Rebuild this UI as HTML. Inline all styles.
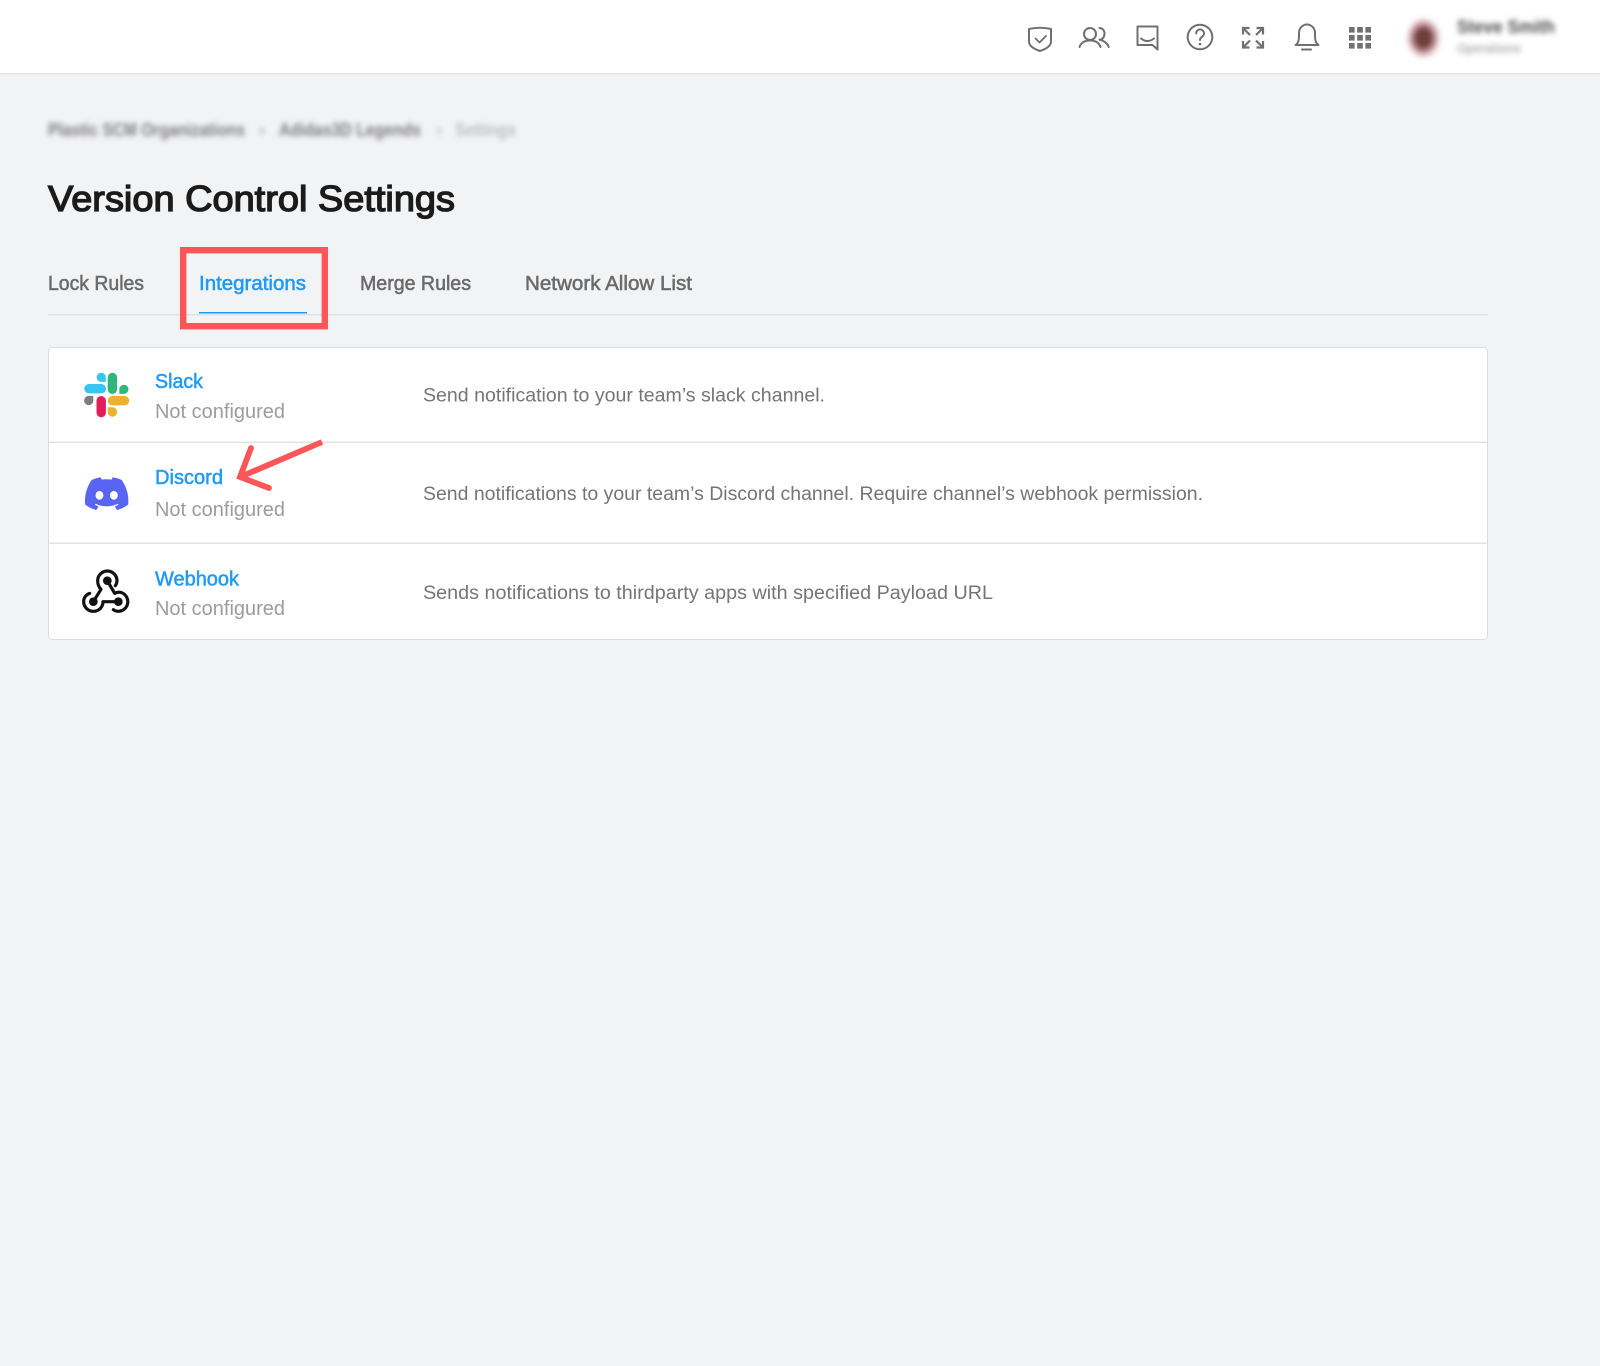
<!DOCTYPE html>
<html lang="en">
<head>
<meta charset="utf-8">
<title>Version Control Settings</title>
<style>
html,body{margin:0;padding:0;background:#f2f3f5;}
body{width:1600px;height:1366px;overflow:hidden;}
svg{display:block;font-family:"Liberation Sans",Arial,sans-serif;filter:blur(.35px);}
.ic{fill:none;stroke:#707070;stroke-width:2;stroke-linecap:round;stroke-linejoin:round;}
.tab{font-size:20px;fill:#6b6b6b;stroke:#6b6b6b;stroke-width:.55;}
.name{font-size:20px;fill:#1f9bf5;stroke:#1f9bf5;stroke-width:.5;}
.nc{font-size:20px;fill:#9c9c9c;}
.desc{font-size:19px;fill:#757575;}
</style>
</head>
<body>
<svg width="1600" height="1366" viewBox="0 0 1600 1366" xmlns="http://www.w3.org/2000/svg">
<defs>
<filter id="b3" x="-20%" y="-100%" width="140%" height="300%"><feGaussianBlur stdDeviation="2.6"/></filter>
<filter id="b4" x="-60%" y="-60%" width="220%" height="220%"><feGaussianBlur stdDeviation="3.2"/></filter>
</defs>
<rect width="1600" height="1366" fill="#f2f3f5"/>

<!-- header -->
<rect width="1600" height="73" fill="#fff"/>
<rect y="73" width="1600" height="1.5" fill="#e4e5e7"/>

<g class="ic">
<!-- shield -->
<path d="M1029 29Q1040 26.5 1051 29V41.5C1051 46 1046 49 1040 51C1034 49 1029 46 1029 41.5Z"/>
<path d="M1035.5 38.5L1039.5 42.5L1046 36" stroke-width="1.8"/>
<!-- users -->
<circle cx="1090" cy="34" r="6"/>
<path d="M1079.5 47C1081 42.5 1085 40.5 1090 40.5S1099 42.5 1100.5 47"/>
<path d="M1099.5 28C1102.5 28 1104.5 30.5 1104.5 33.8S1102.5 39.5 1099.5 39.8C1103.5 40.5 1107.5 43 1108.7 47"/>
<!-- inbox -->
<path d="M1137.5 26.5H1157.5V49.5L1152.5 45H1137.5Z"/>
<path d="M1141 38.5Q1147.5 43.5 1154 38.5"/>
<!-- help -->
<circle cx="1200" cy="37" r="12.3"/>
<path d="M1196.2 33.5A3.9 3.9 0 1 1 1202.4 36.5C1200.8 37.6 1200 38.4 1200 40"/>
<!-- expand -->
<path d="M1243 34.5V28H1249.5M1243.5 28.5L1250 35M1263 34.5V28H1256.5M1262.5 28.5L1256 35M1243 41V47.5H1249.5M1243.5 47L1250 40.5M1263 41V47.5H1256.5M1262.5 47L1256 40.5" stroke-linecap="butt" stroke-linejoin="miter" stroke-width="2.2"/>
<!-- bell -->
<path d="M1295.5 45C1298.5 43.5 1299 40 1299 36V33A8 8.5 0 0 1 1315 33V36C1315 40 1315.5 43.5 1318.5 45Z"/>
<path d="M1302 49.5H1311"/>
</g>
<circle cx="1200" cy="44" r="1.3" fill="#707070"/>
<!-- grid -->
<g fill="#707070">
<rect x="1349" y="27" width="5.6" height="5.6"/><rect x="1357.2" y="27" width="5.6" height="5.6"/><rect x="1365.4" y="27" width="5.6" height="5.6"/>
<rect x="1349" y="35" width="5.6" height="5.6"/><rect x="1357.2" y="35" width="5.6" height="5.6"/><rect x="1365.4" y="35" width="5.6" height="5.6"/>
<rect x="1349" y="43" width="5.6" height="5.6"/><rect x="1357.2" y="43" width="5.6" height="5.6"/><rect x="1365.4" y="43" width="5.6" height="5.6"/>
</g>
<!-- avatar + user -->
<g filter="url(#b4)">
<ellipse cx="1423.5" cy="38" rx="15" ry="18" fill="#d8a5b0"/>
<ellipse cx="1423.5" cy="38" rx="11" ry="13" fill="#6f3f38"/>
</g>
<text x="1457" y="33" font-size="18" font-weight="700" fill="#4d4d4d" textLength="98" lengthAdjust="spacingAndGlyphs" filter="url(#b3)">Steve Smith</text>
<text x="1457" y="53" font-size="14" font-weight="700" fill="#b0b0b0" textLength="64" lengthAdjust="spacingAndGlyphs" filter="url(#b3)">Operations</text>

<!-- breadcrumb -->
<g filter="url(#b3)" font-size="18" font-weight="700">
<text x="48" y="136" fill="#7a7a7a" textLength="197" lengthAdjust="spacingAndGlyphs">Plastic SCM Organizations</text>
<text x="259" y="136" fill="#aaa">›</text>
<text x="279" y="136" fill="#7a7a7a" textLength="142" lengthAdjust="spacingAndGlyphs">Adidas3D Legends</text>
<text x="436" y="136" fill="#bbb">›</text>
<text x="455" y="136" fill="#bcbcbc" textLength="61" lengthAdjust="spacingAndGlyphs">Settings</text>
</g>

<!-- title -->
<text x="48" y="211" font-size="36.5" fill="#1b1b1b" stroke="#1b1b1b" stroke-width="1.35" textLength="407" lengthAdjust="spacingAndGlyphs">Version Control Settings</text>

<!-- tabs -->
<text class="tab" x="48" y="290" textLength="96" lengthAdjust="spacingAndGlyphs">Lock Rules</text>
<text class="tab" x="199" y="290" textLength="107" lengthAdjust="spacingAndGlyphs" style="fill:#1f9bf5;stroke:#1f9bf5">Integrations</text>
<text class="tab" x="360" y="290" textLength="111" lengthAdjust="spacingAndGlyphs">Merge Rules</text>
<text class="tab" x="525" y="290" textLength="167" lengthAdjust="spacingAndGlyphs">Network Allow List</text>
<rect x="48" y="314" width="1440" height="1.5" fill="#e1e2e4"/>
<rect x="199" y="312" width="108" height="1.5" fill="#1f9bf5"/>

<!-- card -->
<rect x="48.5" y="347.5" width="1439" height="292" rx="4" fill="#fff" stroke="#dcdde0"/>
<rect x="49" y="441.5" width="1438" height="1.5" fill="#e1e2e4"/>
<rect x="49" y="542.5" width="1438" height="1.5" fill="#e1e2e4"/>

<!-- slack icon -->
<g>
<rect x="84.3" y="384" width="21.7" height="9.4" rx="4.7" fill="#36c5f0"/>
<path d="M101.2 372.7a4.6 4.6 0 1 0 0 9.2h4.6v-4.6a4.6 4.6 0 0 0-4.6-4.6z" fill="#36c5f0"/>
<rect x="107.7" y="372.7" width="9.4" height="21.3" rx="4.7" fill="#2eb67d"/>
<path d="M128.5 389.3a4.6 4.6 0 1 0-9.2 0v4.6h4.6a4.6 4.6 0 0 0 4.6-4.6z" fill="#2eb67d"/>
<path d="M84.1 400.5a4.6 4.6 0 0 0 9.2 0v-4.6h-4.6a4.6 4.6 0 0 0-4.6 4.6z" fill="#7d7d7d"/>
<rect x="96.5" y="396" width="9.4" height="21.3" rx="4.7" fill="#e01e5a"/>
<rect x="107.7" y="396" width="21.5" height="9.4" rx="4.7" fill="#ecb22e"/>
<path d="M107.7 407.3v4.8a4.7 4.7 0 1 0 4.7-4.8z" fill="#ecb22e"/>
</g>

<!-- discord icon -->
<g transform="translate(85 477.3) scale(.341)">
<path fill="#5865f2" d="M107.7,8.07A105.15,105.15,0,0,0,81.47,0a72.06,72.06,0,0,0-3.36,6.83A97.68,97.68,0,0,0,49,6.83,72.37,72.37,0,0,0,45.64,0,105.89,105.89,0,0,0,19.39,8.09C2.79,32.65-1.71,56.6.54,80.21h0A105.73,105.73,0,0,0,32.71,96.36,77.7,77.7,0,0,0,39.6,85.25a68.42,68.42,0,0,1-10.85-5.18c.91-.66,1.8-1.34,2.66-2a75.57,75.57,0,0,0,64.32,0c.87.71,1.76,1.39,2.66,2a68.68,68.68,0,0,1-10.87,5.19,77,77,0,0,0,6.89,11.1A105.25,105.25,0,0,0,126.6,80.22h0C129.24,52.84,122.09,29.11,107.7,8.07ZM42.45,65.69C36.18,65.69,31,60,31,53s5-12.74,11.43-12.74S54,46,53.89,53,48.84,65.69,42.45,65.69Zm42.24,0C78.41,65.69,73.25,60,73.25,53s5-12.74,11.44-12.74S96.23,46,96.12,53,91.08,65.69,84.69,65.69Z"/>
</g>

<!-- webhook icon -->
<g transform="translate(70 560) scale(.3333)" fill="none" stroke="#111" stroke-width="9.5" stroke-linecap="round" stroke-linejoin="round">
<path d="M70 125L93 88C86 81 83 72 83 62A29 29 0 0 1 141 62C141 68 139 73 136 77"/>
<path d="M112 62L134 100C141 96 149 96 155 98A29 29 0 0 1 145 154C139 154 134 152 130 149"/>
<path d="M145 125H99C99 142 86 154 70 154A29 29 0 0 1 41 125C41 113 48 104 59 100"/>
<circle cx="112" cy="62" r="13" fill="#111" stroke="none"/>
<circle cx="70" cy="125" r="13" fill="#111" stroke="none"/>
<circle cx="145" cy="125" r="13" fill="#111" stroke="none"/>
</g>

<!-- rows -->
<text class="name" x="155" y="388" textLength="48" lengthAdjust="spacingAndGlyphs">Slack</text>
<text class="nc" x="155" y="418" textLength="130" lengthAdjust="spacingAndGlyphs">Not configured</text>
<text class="desc" x="423" y="401.5" textLength="402" lengthAdjust="spacingAndGlyphs">Send notification to your team’s slack channel.</text>

<text class="name" x="155" y="484" textLength="68" lengthAdjust="spacingAndGlyphs">Discord</text>
<text class="nc" x="155" y="516" textLength="130" lengthAdjust="spacingAndGlyphs">Not configured</text>
<text class="desc" x="423" y="500" textLength="780" lengthAdjust="spacingAndGlyphs">Send notifications to your team’s Discord channel. Require channel’s webhook permission.</text>

<text class="name" x="155" y="585.5" textLength="84" lengthAdjust="spacingAndGlyphs">Webhook</text>
<text class="nc" x="155" y="615" textLength="130" lengthAdjust="spacingAndGlyphs">Not configured</text>
<text class="desc" x="423" y="599" textLength="570" lengthAdjust="spacingAndGlyphs">Sends notifications to thirdparty apps with specified Payload URL</text>

<!-- annotations -->
<rect x="183.2" y="250.2" width="141.6" height="76" fill="none" stroke="#fd5558" stroke-width="6.4"/>
<path d="M322 442L240 477" fill="none" stroke="#fd5558" stroke-width="5.8"/>
<path d="M251 448L240 477L269 488" fill="none" stroke="#fd5558" stroke-width="5.8" stroke-linecap="round" stroke-linejoin="miter"/>
</svg>
</body>
</html>
